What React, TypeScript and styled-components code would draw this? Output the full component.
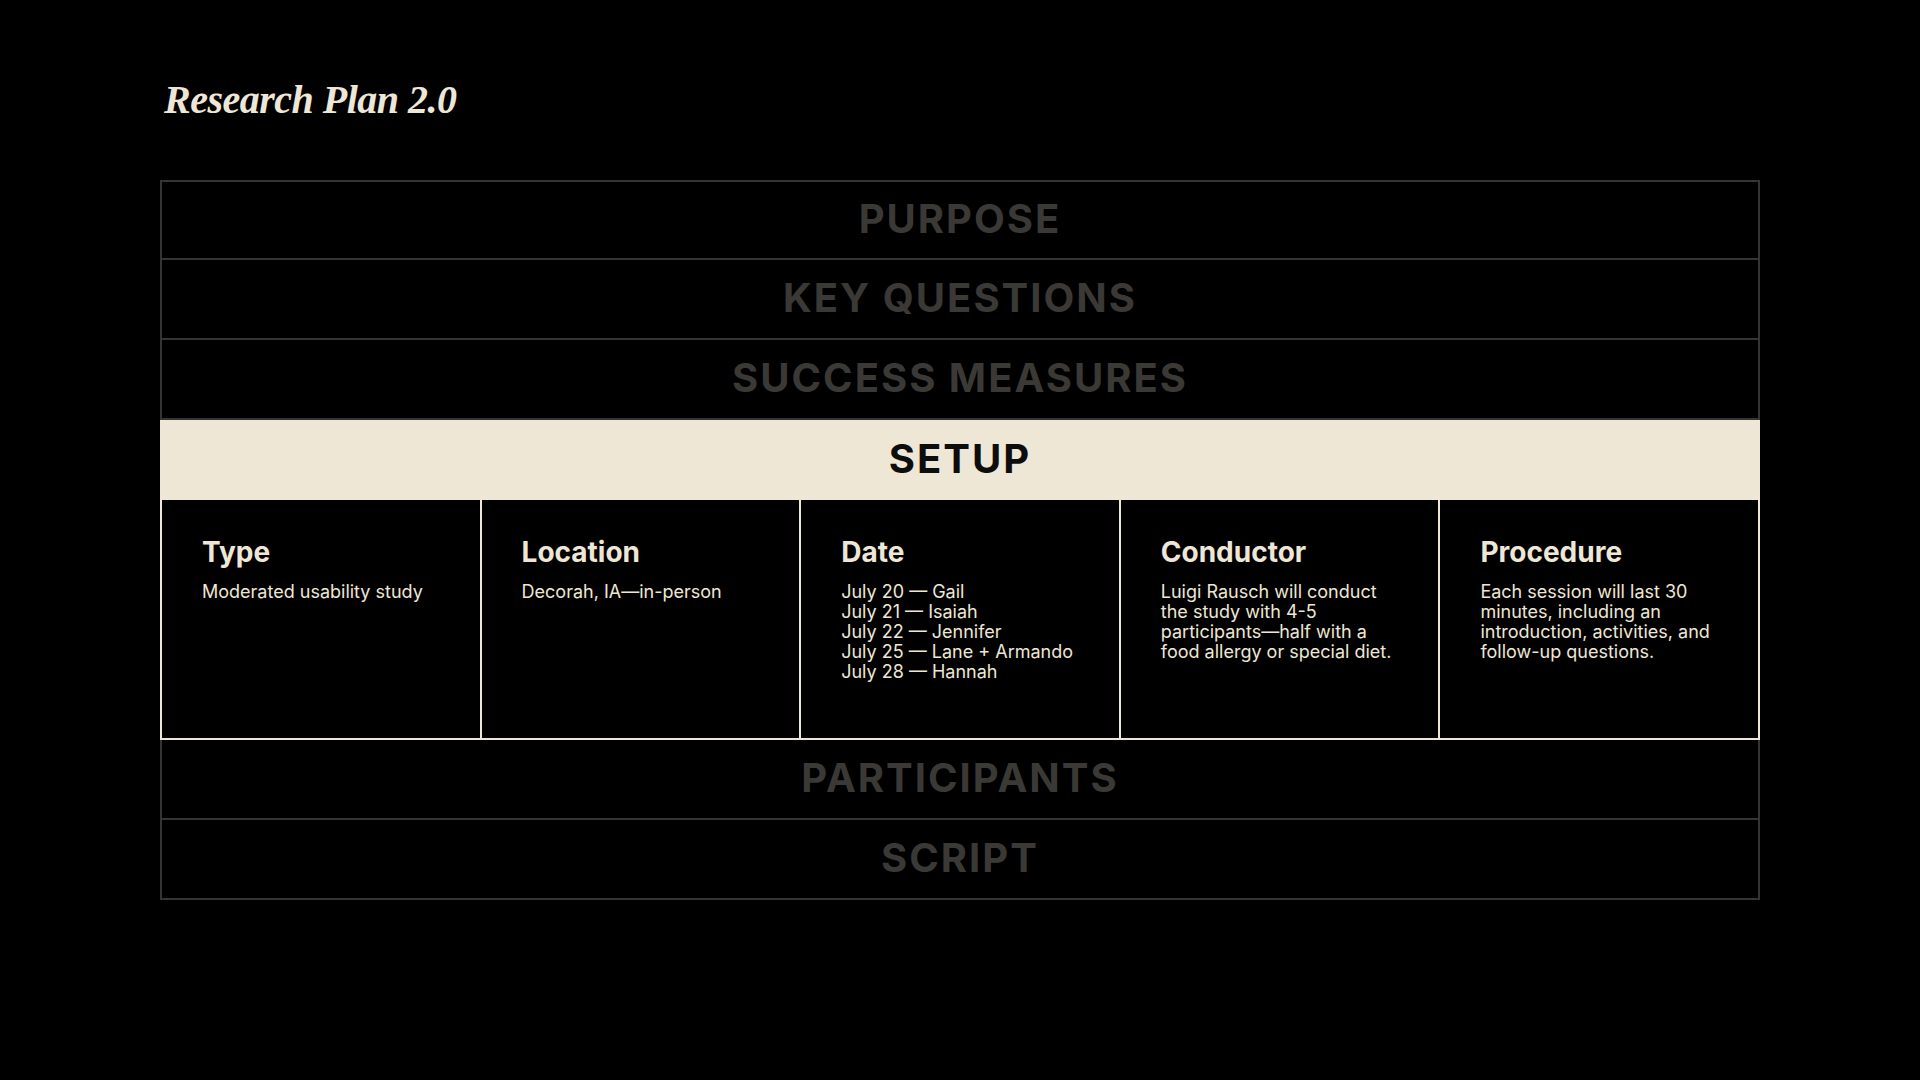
import React from 'react'
import styled, { createGlobalStyle } from 'styled-components'

const colors = {
  cream: '#efe7d5',
  muted: '#3a3936',
  line: '#343432',
  ink: '#0d0d0d'
}

const GlobalStyle = createGlobalStyle`
  html, body {
    margin: 0;
    padding: 0;
    background: #000;
  }
  * {
    box-sizing: border-box;
  }
`

const Page = styled.div`
  width: 1920px;
  height: 1080px;
  background: #000;
  padding: 70px 160px 0;
  font-family: Inter, 'Open Sans', sans-serif;
`

const Title = styled.h1`
  margin: 0 0 0 4px;
  height: 110px;
  font-family: 'Liberation Serif', serif;
  font-style: italic;
  font-weight: 700;
  font-size: 40px;
  line-height: 60px;
  color: ${colors.cream};
  letter-spacing: -0.5px;
`

const Table = styled.div`
  width: 1600px;
  display: flex;
  flex-direction: column;
`

const SectionRow = styled.div<{ $first?: boolean }>`
  height: 80px;
  display: flex;
  align-items: center;
  justify-content: center;
  padding-bottom: 4px;
  border: 2px solid ${colors.line};
  border-top-width: ${p => (p.$first ? '2px' : '0')};
  color: ${colors.muted};
  font-weight: 700;
  font-size: 40px;
  letter-spacing: 2px;
  text-transform: uppercase;
`

const ActiveRow = styled.div`
  height: 80px;
  display: flex;
  align-items: center;
  justify-content: center;
  padding-bottom: 4px;
  background: ${colors.cream};
  color: ${colors.ink};
  font-weight: 700;
  font-size: 40px;
  letter-spacing: 2px;
`

const Cells = styled.div`
  height: 240px;
  display: grid;
  grid-template-columns: repeat(5, 1fr);
  border-left: 2px solid ${colors.cream};
  border-bottom: 2px solid ${colors.cream};
`

const Cell = styled.div`
  border-right: 2px solid ${colors.cream};
  padding: 36px 24px 0 40px;
  color: ${colors.cream};
`

const CellHeading = styled.h3`
  margin: 0 0 14px;
  font-size: 28px;
  font-weight: 700;
  line-height: 32px;
`

const CellText = styled.p`
  margin: 0;
  font-size: 18px;
  line-height: 20px;
  white-space: pre-line;
`

const before = ['Purpose', 'Key Questions', 'Success Measures']
const after = ['Participants', 'Script']

const setup = [
  { heading: 'Type', text: 'Moderated usability study' },
  { heading: 'Location', text: 'Decorah, IA\u2014in-person' },
  {
    heading: 'Date',
    text:
      'July 20 \u2014 Gail\nJuly 21 \u2014 Isaiah\nJuly 22 \u2014 Jennifer\nJuly 25 \u2014 Lane + Armando\nJuly 28 \u2014 Hannah'
  },
  {
    heading: 'Conductor',
    text:
      'Luigi Rausch will conduct\nthe study with 4-5\nparticipants\u2014half with a\nfood allergy or special diet.'
  },
  {
    heading: 'Procedure',
    text:
      'Each session will last 30\nminutes, including an\nintroduction, activities, and\nfollow-up questions.'
  }
]

const App: React.FC = () => {
  return (
    <Page>
      <GlobalStyle />
      <Title>Research Plan 2.0</Title>
      <Table>
        {before.map((item, i) => (
          <SectionRow key={item} $first={i === 0}>
            {item}
          </SectionRow>
        ))}
        <ActiveRow>SETUP</ActiveRow>
        <Cells>
          {setup.map(item => (
            <Cell key={item.heading}>
              <CellHeading>{item.heading}</CellHeading>
              <CellText>{item.text}</CellText>
            </Cell>
          ))}
        </Cells>
        {after.map(item => (
          <SectionRow key={item}>{item}</SectionRow>
        ))}
      </Table>
    </Page>
  )
}

export default App
